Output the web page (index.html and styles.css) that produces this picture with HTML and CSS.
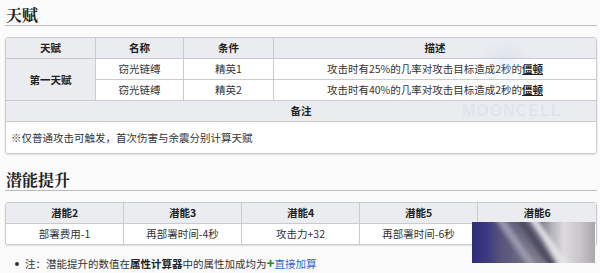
FILE: index.html
```html
<!DOCTYPE html>
<html lang="zh-CN">
<head>
<meta charset="utf-8">
<link rel="stylesheet" href="styles.css">
</head>
<body>
<div class="page">
  <h2 class="sec">天赋</h2>
  <div class="box">
    <table class="wt t1">
      <tr class="hd">
        <th class="c1">天赋</th><th class="c2">名称</th><th class="c3">条件</th><th class="last">描述</th>
      </tr>
      <tr>
        <th class="rs" rowspan="2">第一天赋</th>
        <td>窃光链缚</td><td>精英1</td>
        <td class="last">攻击时有25%的几率对攻击目标造成2秒的<a class="kw">僵顿</a></td>
      </tr>
      <tr>
        <td>窃光链缚</td><td>精英2</td>
        <td class="last">攻击时有40%的几率对攻击目标造成2秒的<a class="kw">僵顿</a></td>
      </tr>
      <tr class="hd">
        <th class="last" colspan="4">备注</th>
      </tr>
      <tr class="end">
        <td class="last note-cell" colspan="4">※仅普通攻击可触发，首次伤害与余震分别计算天赋</td>
      </tr>
    </table>
  </div>

  <h2 class="sec sec2">潜能提升</h2>
  <div class="box">
    <table class="wt t2">
      <tr class="hd">
        <th>潜能2</th><th>潜能3</th><th>潜能4</th><th>潜能5</th><th class="last">潜能6</th>
      </tr>
      <tr class="end">
        <td>部署费用-1</td><td>再部署时间-4秒</td><td>攻击力+32</td><td>再部署时间-6秒</td><td class="last"></td>
      </tr>
    </table>
  </div>

  <ul class="notes">
    <li>注：潜能提升的数值在<b>属性计算器</b>中的属性加成均为<span class="plus">+</span><a class="blue">直接加算</a></li>
  </ul>

  <div class="wm-logo"></div>
  <div class="wm">MOONCELL</div>
  <div class="photo">
    <div class="streak s1"></div>
    <div class="streak s2"></div>
    <div class="streak s3"></div>
  </div>
</div>
</body>
</html>
```

FILE: styles.css
```css
html, body {
  margin: 0;
  padding: 0;
  background: #fbfbfb;
}
body {
  font-family: "Noto Sans CJK SC", "Noto Sans", sans-serif;
  color: #222;
  width: 600px;
  height: 273px;
  overflow: hidden;
}
.page {
  position: relative;
  padding: 0 3px 0 5px;
}
.sec {
  margin: 0;
  padding-top: 5px;
  font-family: "Noto Serif CJK SC", "Liberation Serif", serif;
  font-weight: bold;
  font-size: 16px;
  line-height: 20px;
  color: #202122;
  border-bottom: 1px solid #b8bcc2;
  padding-left: 1px;
}
.sec2 {
  padding-top: 16px;
}
.box {
  margin-top: 11px;
  border: 1px solid #c8ccd1;
  border-radius: 3px;
  overflow: hidden;
  box-shadow: 0 1px 2px rgba(0,0,0,0.12);
  background: #fff;
}
.wt {
  width: 100%;
  border-collapse: separate;
  border-spacing: 0;
  font-size: 10.5px;
  table-layout: fixed;
}
.wt th, .wt td {
  padding: 0;
  height: 20px;
  line-height: 20px;
  text-align: center;
  border-right: 1px solid #c8ccd1;
  border-bottom: 1px solid #c8ccd1;
  color: #333;
  white-space: nowrap;
}
.wt th {
  background: #eaecf0;
  font-weight: bold;
  color: #222;
}
.wt td {
  background: #fff;
  font-weight: normal;
}
.wt .last {
  border-right: none;
}
.wt .end td, .wt .end th {
  border-bottom: none;
}
.t1 .c1 { width: 89px; }
.t1 .c2 { width: 87px; }
.t1 .c3 { width: 89px; }
.kw {
  font-weight: bold;
  color: #222;
  text-decoration: underline;
}
.note-cell {
  text-align: left !important;
  padding-left: 5px !important;
  height: 31px !important;
  line-height: 31px !important;
}
.notes {
  margin: 9px 0 0 0;
  padding: 0 0 0 20px;
  font-size: 10.5px;
  line-height: 18px;
  color: #333;
  list-style: none;
}
.notes li {
  position: relative;
}
.notes li::before {
  content: "";
  position: absolute;
  left: -10px;
  top: 8px;
  width: 4px;
  height: 4px;
  border-radius: 50%;
  background: #333;
}
.notes b {
  color: #222;
}
.plus {
  color: #2a8a2a;
  font-weight: 900;
  font-size: 13px;
}
.blue {
  color: #3366cc;
}
.wm {
  position: absolute;
  left: 462px;
  top: 102px;
  font-family: "Liberation Sans", sans-serif;
  font-weight: bold;
  font-size: 16px;
  letter-spacing: 1px;
  color: rgba(150, 165, 195, 0.12);
}
.wm-logo {
  position: absolute;
  left: 475px;
  top: 38px;
  width: 60px;
  height: 50px;
  background: radial-gradient(ellipse at center, rgba(160,190,225,0.18), rgba(160,190,225,0) 70%);
}
.photo {
  position: absolute;
  z-index: 5;
  left: 472px;
  top: 222px;
  width: 123px;
  height: 41px;
  overflow: hidden;
  background-color: #6e6c80;
  background-image: linear-gradient(90deg, #2e2c78 0px, #3a3880 14px, #55537a 28px, #6c6a80 50px, #7e7c8c 70px, #b4b2ba 80px, #dcdadc 92px, #c8c6ca 108px, #a9a7ab 123px);
}
.streak {
  position: absolute;
  width: 8px;
  height: 60px;
  top: -10px;
  transform: rotate(-35deg);
  filter: blur(2px);
}
.s1 { left: 40px; background: #9a98ae; }
.s2 { left: 60px; background: #4e4c62; }
.s3 { left: 74px; background: #e8e6ea; width: 6px; }
```
